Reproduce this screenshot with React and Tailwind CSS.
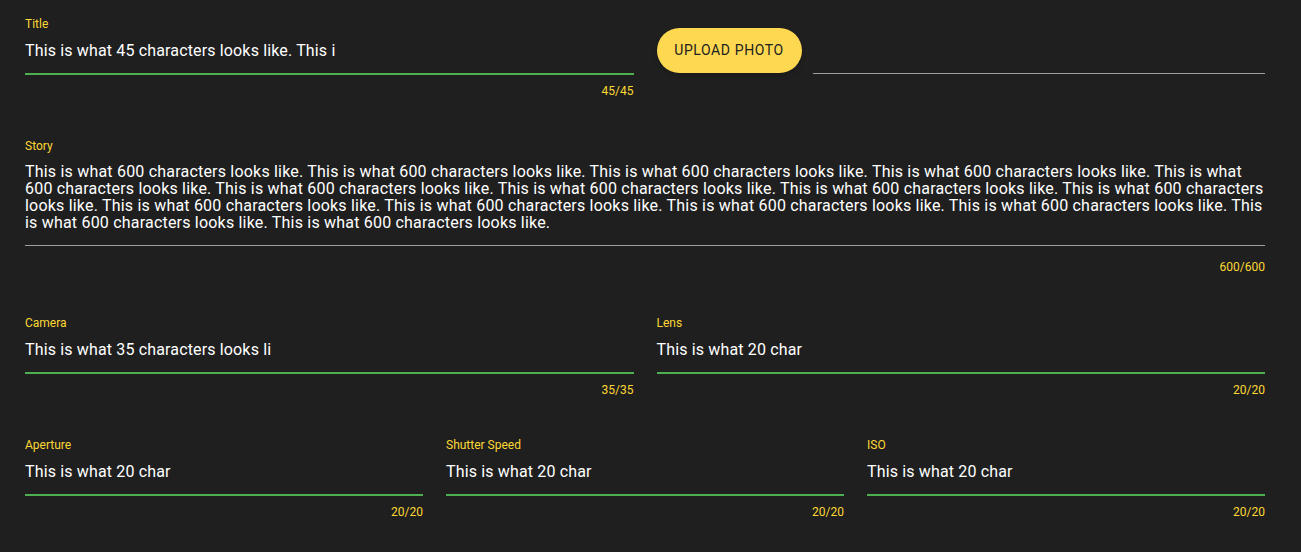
const story =
  "This is what 600 characters looks like. This is what 600 characters looks like. This is what 600 characters looks like. This is what 600 characters looks like. This is what 600 characters looks like. This is what 600 characters looks like. This is what 600 characters looks like. This is what 600 characters looks like. This is what 600 characters looks like. This is what 600 characters looks like. This is what 600 characters looks like. This is what 600 characters looks like. This is what 600 characters looks like. This is what 600 characters looks like. This is what 600 characters looks like.";

function Field({ label, value, count, className = "" }) {
  return (
    <div className={"flex flex-col " + className}>
      <label className="text-[12px] leading-[14px] text-[#fdd835]">{label}</label>
      <div className="mt-[10px] border-b-2 border-[#4caf50] pb-[12px] text-[16px] leading-[20px] tracking-[0.15px] text-white">
        {value}
      </div>
      <div className="mt-[9px] text-right text-[12px] leading-[14px] text-[#fdd835]">{count}</div>
    </div>
  );
}

export default function App() {
  return (
    <div
      className="min-h-[552px] bg-[#1f1f1f] pl-[25px] pr-[36px] pt-[17px]"
      style={{ fontFamily: "Roboto, 'Liberation Sans', sans-serif" }}
    >
      <div className="flex gap-[23px]">
        <Field
          className="flex-1"
          label="Title"
          value="This is what 45 characters looks like. This i"
          count="45/45"
        />
        <div className="flex flex-1 items-start gap-[11px] pt-[11px]">
          <button
            type="button"
            className="h-[45px] w-[145px] shrink-0 rounded-full bg-[#fdd850] text-[14px] tracking-[0.6px] text-[#222] shadow-md"
          >
            UPLOAD PHOTO
          </button>
          <div className="mt-[45px] h-px flex-1 bg-[#9e9e9e]" />
        </div>
      </div>

      <div className="mt-[41px] flex flex-col">
        <label className="text-[12px] leading-[14px] text-[#fdd835]">Story</label>
        <div className="mt-[10px] border-b border-[#9e9e9e] pb-[14px] text-[16px] leading-[17px] tracking-[0.2px] text-white">
          {story}
        </div>
        <div className="mt-[14px] text-right text-[12px] leading-[14px] text-[#fdd835]">600/600</div>
      </div>

      <div className="mt-[42px] flex gap-[23px]">
        <Field className="flex-1" label="Camera" value="This is what 35 characters looks li" count="35/35" />
        <Field className="flex-1" label="Lens" value="This is what 20 char" count="20/20" />
      </div>

      <div className="mt-[41px] flex gap-[23px]">
        <Field className="flex-1" label="Aperture" value="This is what 20 char" count="20/20" />
        <Field className="flex-1" label="Shutter Speed" value="This is what 20 char" count="20/20" />
        <Field className="flex-1" label="ISO" value="This is what 20 char" count="20/20" />
      </div>
    </div>
  );
}
